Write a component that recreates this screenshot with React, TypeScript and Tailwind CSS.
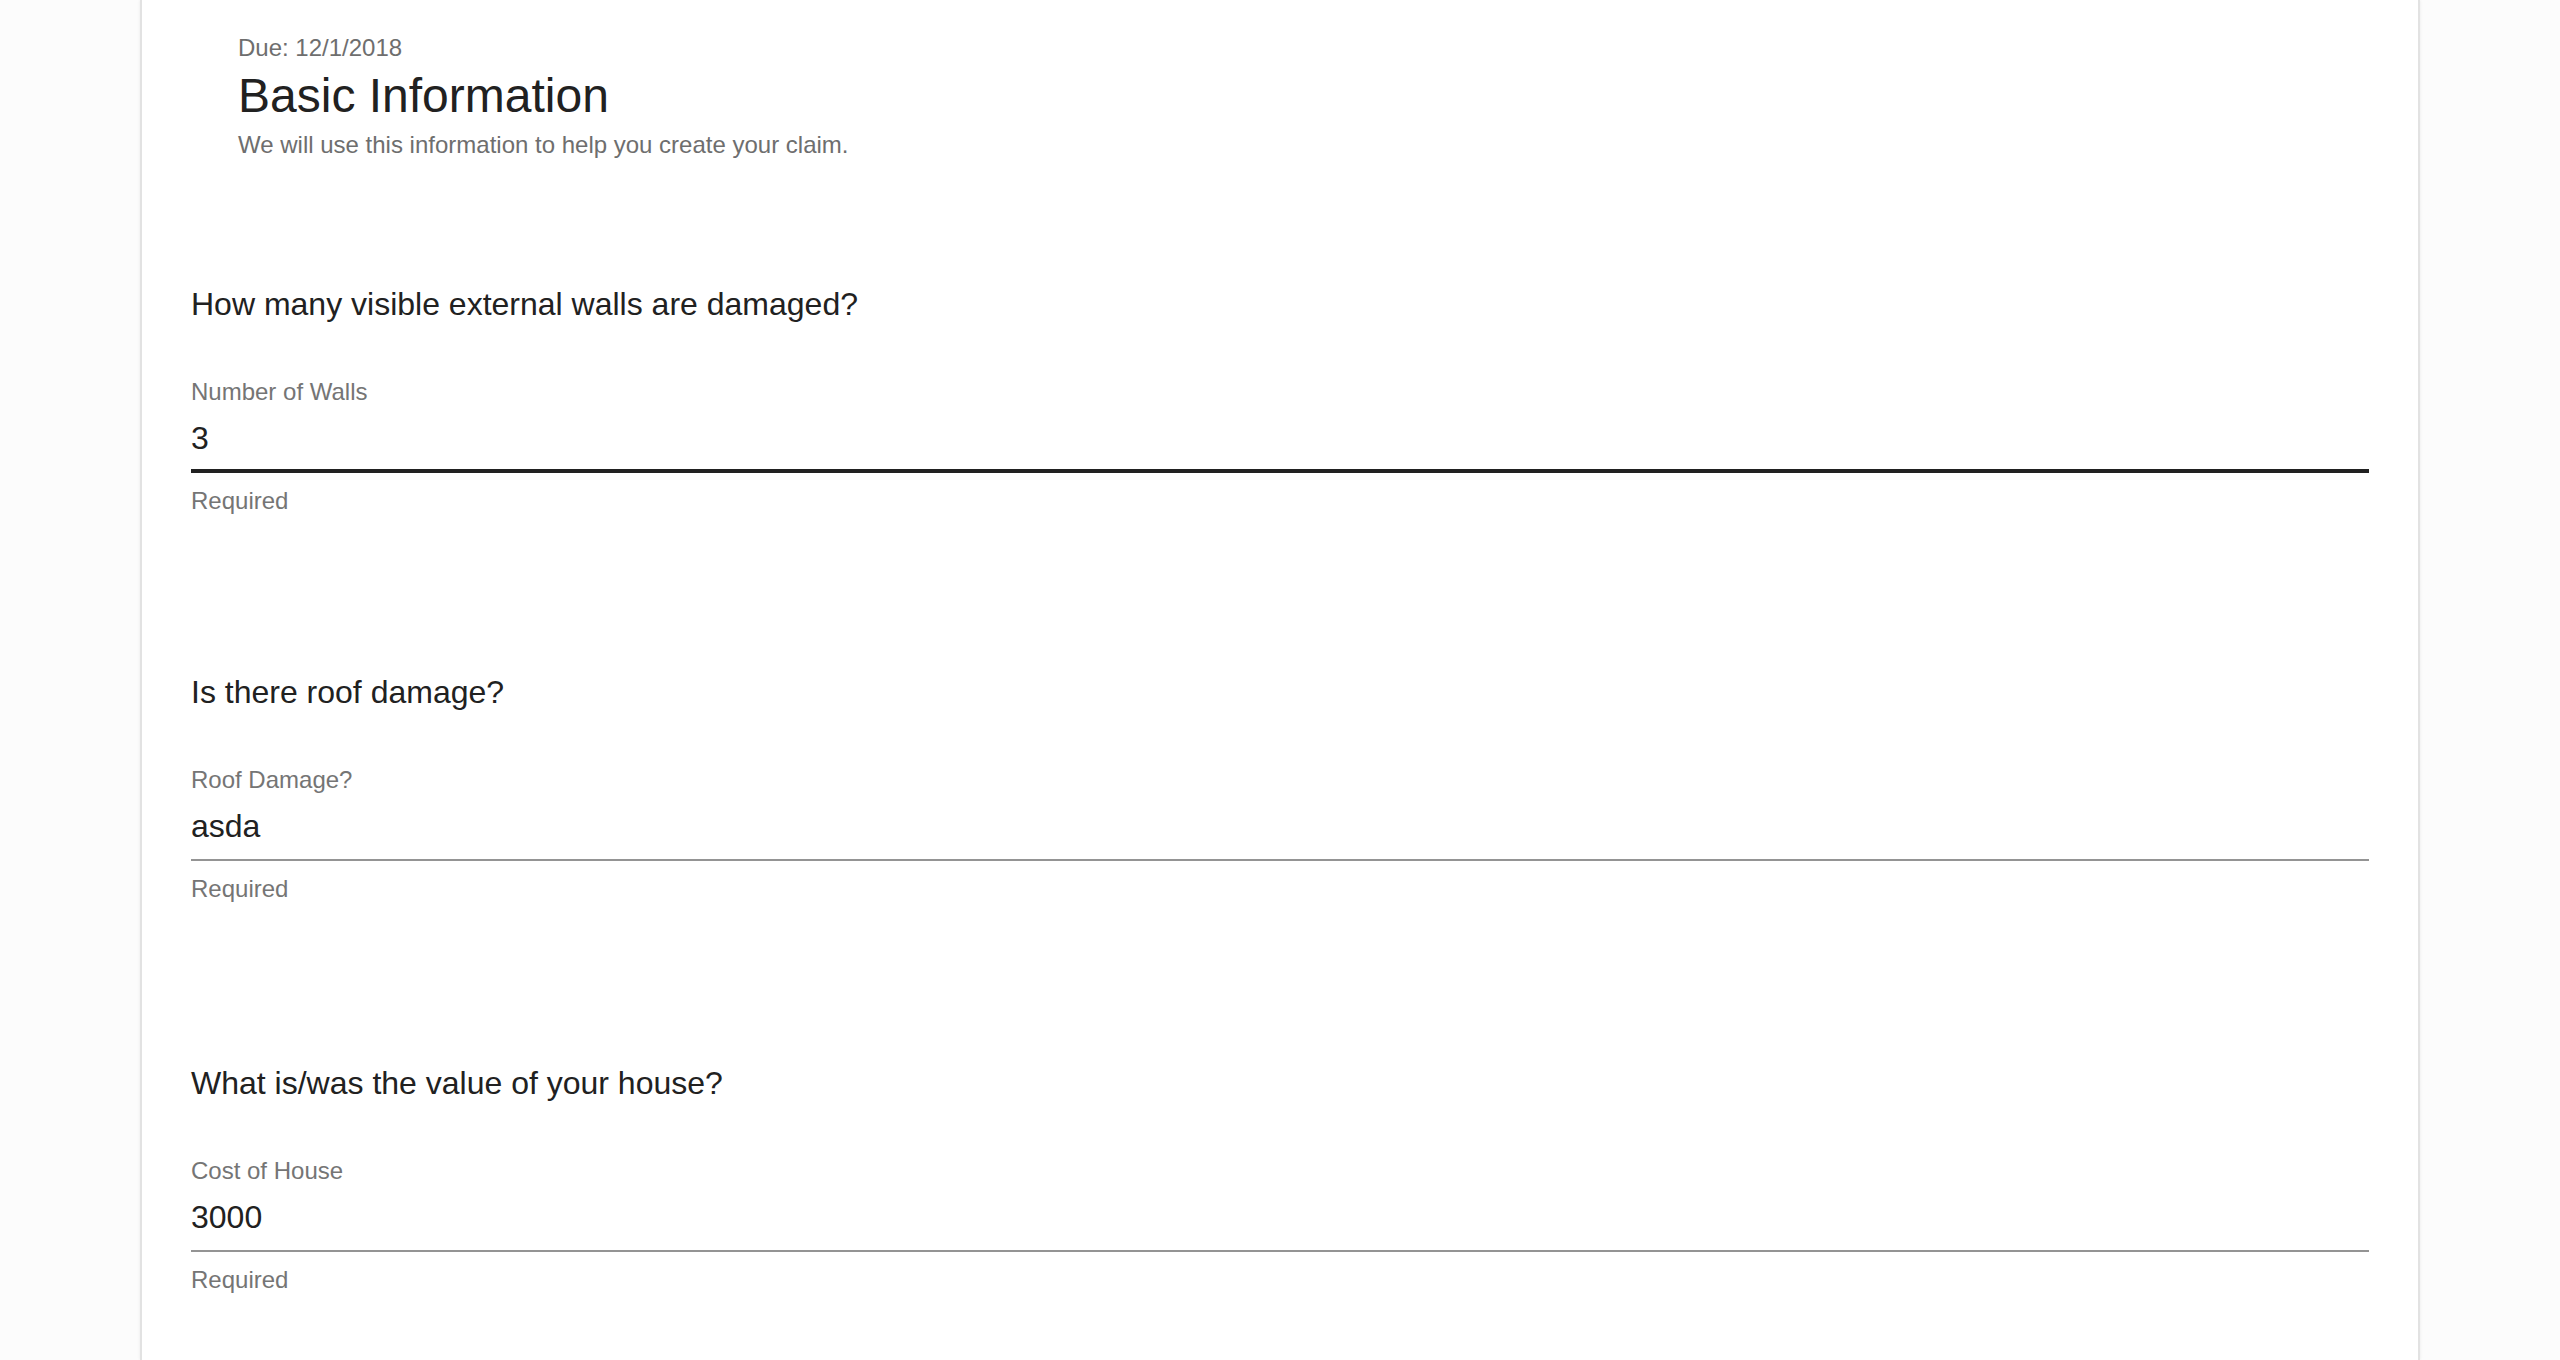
const questions = [
  { question: 'How many visible external walls are damaged?', label: 'Number of Walls', value: '3', focused: true, gap: 'mt-0' },
  { question: 'Is there roof damage?', label: 'Roof Damage?', value: 'asda', focused: false, gap: 'mt-[158px]' },
  { question: 'What is/was the value of your house?', label: 'Cost of House', value: '3000', focused: false, gap: 'mt-[161px]' },
]

function QuestionField({
  question,
  label,
  value,
  focused,
  gap,
}: {
  question: string
  label: string
  value: string
  focused: boolean
  gap: string
}) {
  return (
    <section className={`flex flex-col ${gap}`}>
      <h2 className="text-[32px] leading-[38px] text-[#212121]">{question}</h2>
      <label className="mt-[55px] text-[24px] leading-[28px] text-[#757575]">{label}</label>
      <div
        className={
          focused
            ? 'mt-[13px] h-[54px] border-b-[4px] border-[#212121]'
            : 'mt-[13px] h-[54px] border-b-2 border-[#949494]'
        }
      >
        <div className="text-[32px] leading-[38px] text-[#212121]">{value}</div>
      </div>
      <p className="mt-[14px] text-[24px] leading-[28px] text-[#757575]">Required</p>
    </section>
  )
}

export default function App() {
  return (
    <div
      className="min-h-screen bg-[#fcfcfc]"
      style={{ fontFamily: '"Liberation Sans", Arial, sans-serif' }}
    >
      <div className="mx-[140px] min-h-[1360px] border-x-2 border-[#e2e2e2] bg-white px-[49px] shadow-[0_0_3px_rgba(0,0,0,0.08)]">
        <header className="pl-[47px] pt-[34px]">
          <p className="text-[24px] leading-[28px] text-[#6e6e6e]">Due: 12/1/2018</p>
          <h1 className="mt-[6px] text-[48px] leading-[56px] text-[#212121]">Basic Information</h1>
          <p className="mt-[7px] text-[24px] leading-[28px] text-[#6e6e6e]">
            We will use this information to help you create your claim.
          </p>
        </header>

        <div className="mt-[126px] flex flex-col">
          {questions.map((q) => (
            <QuestionField key={q.label} {...q} />
          ))}
        </div>
      </div>
    </div>
  )
}
